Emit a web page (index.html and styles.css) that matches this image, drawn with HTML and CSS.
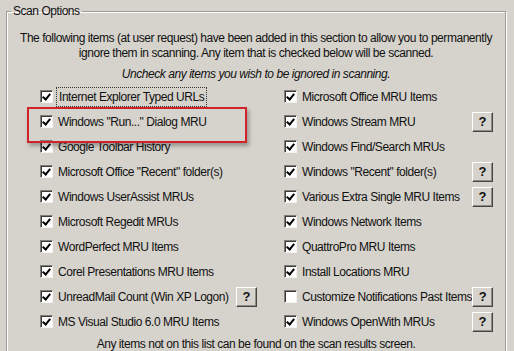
FILE: index.html
```html
<!DOCTYPE html>
<html lang="en">

<head>
    <meta charset="UTF-8">
    <meta name="viewport" content="width=device-width, initial-scale=1.0">
    <title>Scan Options</title>
    <link rel="stylesheet" href="styles.css">
</head>

<body>
    <div class="page">
        <fieldset class="group">
            <legend>Scan Options</legend>
            <p class="intro">The following items (at user request) have been added in this section to allow you to permanently<br>ignore them in scanning. Any item that is checked below will be scanned.</p>
            <p class="hint">Uncheck any items you wish to be ignored in scanning.</p>

            <div class="list">
                <div class="col">
                    <div class="item"><span class="box on"></span><span class="label focus">Internet Explorer Typed URLs</span></div>
                    <div class="item"><span class="box on"></span><span class="label">Windows "Run..." Dialog MRU</span></div>
                    <div class="item"><span class="box on"></span><span class="label">Google Toolbar History</span></div>
                    <div class="item"><span class="box on"></span><span class="label">Microsoft Office "Recent" folder(s)</span></div>
                    <div class="item"><span class="box on"></span><span class="label">Windows UserAssist MRUs</span></div>
                    <div class="item"><span class="box on"></span><span class="label">Microsoft Regedit MRUs</span></div>
                    <div class="item"><span class="box on"></span><span class="label">WordPerfect MRU Items</span></div>
                    <div class="item"><span class="box on"></span><span class="label">Corel Presentations MRU Items</span></div>
                    <div class="item"><span class="box on"></span><span class="label">UnreadMail Count (Win XP Logon)</span><button class="help">?</button></div>
                    <div class="item"><span class="box on"></span><span class="label">MS Visual Studio 6.0 MRU Items</span></div>
                </div>
                <div class="col right">
                    <div class="item"><span class="box on"></span><span class="label">Microsoft Office MRU Items</span></div>
                    <div class="item"><span class="box on"></span><span class="label">Windows Stream MRU</span><button class="help">?</button></div>
                    <div class="item"><span class="box on"></span><span class="label">Windows Find/Search MRUs</span></div>
                    <div class="item"><span class="box on"></span><span class="label">Windows "Recent" folder(s)</span><button class="help">?</button></div>
                    <div class="item"><span class="box on"></span><span class="label">Various Extra Single MRU Items</span><button class="help">?</button></div>
                    <div class="item"><span class="box on"></span><span class="label">Windows Network Items</span></div>
                    <div class="item"><span class="box on"></span><span class="label">QuattroPro MRU Items</span></div>
                    <div class="item"><span class="box on"></span><span class="label">Install Locations MRU</span></div>
                    <div class="item"><span class="box"></span><span class="label">Customize Notifications Past Items</span><button class="help">?</button></div>
                    <div class="item"><span class="box on"></span><span class="label">Windows OpenWith MRUs</span><button class="help">?</button></div>
                </div>
            </div>

            <p class="footer">Any items not on this list can be found on the scan results screen.</p>
        </fieldset>

        <div class="marker"></div>
    </div>
</body>

</html>
```

FILE: styles.css
```css
* {
    margin: 0;
    padding: 0;
    box-sizing: border-box;
}

body {
    background-color: #e9e8e4;
    font-family: "Liberation Sans", Arial, sans-serif;
    font-size: 12px;
    letter-spacing: -0.45px;
    color: #111;
    overflow: hidden;
}

.page {
    position: relative;
    width: 514px;
    height: 351px;
    overflow: hidden;
    padding: 4px 8px 0 6px;
    background-color: #d6d3cc;
}

.group {
    border: 1px solid #9d9b95;
    box-shadow: inset 1px 1px 0 #fff, 1px 1px 0 #fff;
    height: 360px;
}

.group legend {
    margin-left: 4px;
    padding: 0 2px;
    line-height: 14px;
}

.intro {
    margin-top: 13px;
    text-align: center;
    line-height: 15px;
}

.hint {
    margin-top: 6px;
    text-align: center;
    font-style: italic;
    line-height: 15px;
}

.list {
    display: flex;
    margin-top: 2px;
    padding-left: 33px;
}

.col {
    width: 244px;
    padding-right: 27px;
}

.col.right {
    width: 216px;
    padding-right: 7px;
}

.item {
    display: flex;
    align-items: center;
    height: 25px;
}

.box {
    width: 13px;
    height: 13px;
    margin-right: 5px;
    flex-shrink: 0;
    background-color: #fff;
    border-top: 1px solid #7f7d78;
    border-left: 1px solid #7f7d78;
    border-right: 1px solid #f4f3f0;
    border-bottom: 1px solid #f4f3f0;
    box-shadow: inset 1px 1px 0 #3c3b38;
    position: relative;
}

.box.on::after {
    content: "";
    position: absolute;
    left: 2px;
    top: 1px;
    width: 3px;
    height: 6px;
    border-right: 2px solid #000;
    border-bottom: 2px solid #000;
    transform: translate(1px, 0) rotate(40deg);
}

.label {
    flex: 1;
    white-space: nowrap;
    line-height: 16px;
}

.label.focus {
    flex: none;
    outline: 1px dotted #333;
    outline-offset: 1px;
    padding: 0 1px;
}

.help {
    width: 21px;
    height: 20px;
    flex-shrink: 0;
    font-family: "Liberation Sans", Arial, sans-serif;
    font-size: 13px;
    font-weight: bold;
    color: #111;
    background-color: #d6d3cc;
    border: 1px solid;
    border-color: #fff #454440 #454440 #fff;
    box-shadow: inset -1px -1px 0 #8f8d88;
}

.footer {
    margin-top: 3px;
    text-align: center;
    line-height: 15px;
}

.marker {
    position: absolute;
    left: 27px;
    top: 107px;
    width: 220px;
    height: 36px;
    border: 2px solid #d0242a;
    box-shadow: 2px 3px 4px rgba(0, 0, 0, 0.3);
}
```
